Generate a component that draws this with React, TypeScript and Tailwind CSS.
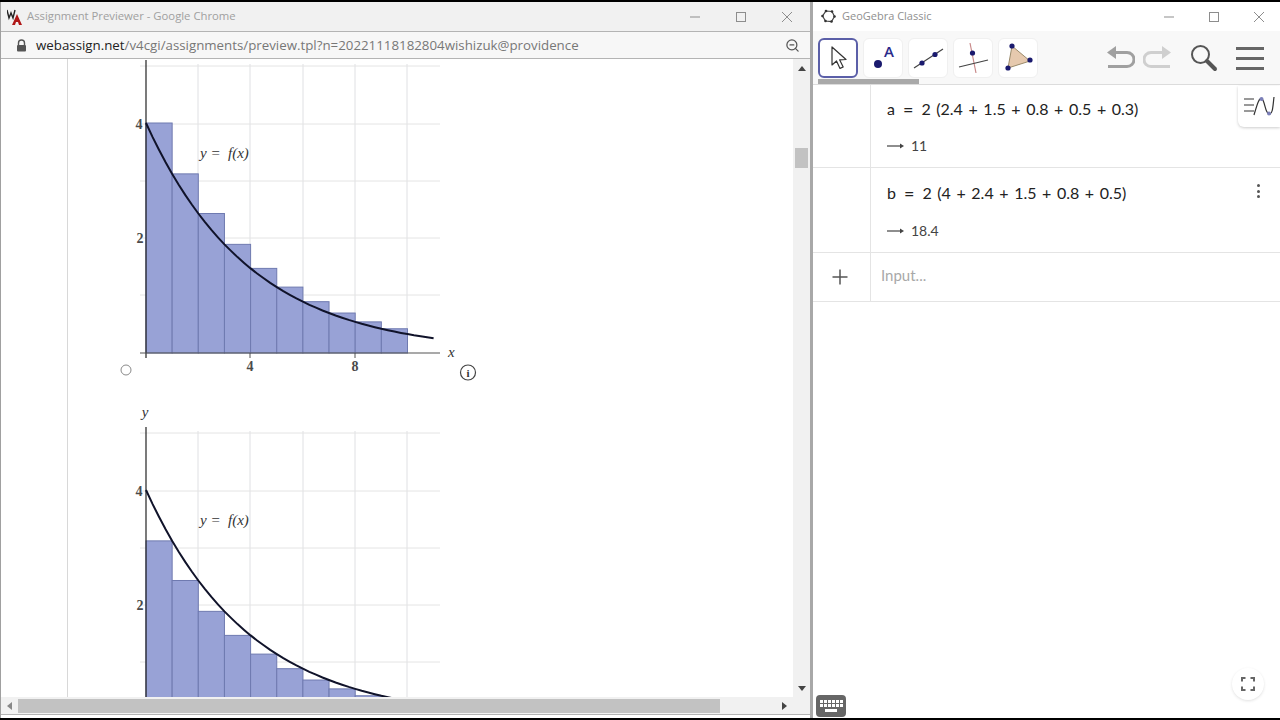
import { ZoomOut } from "lucide-react";

const SANS = "font-['Open_Sans','Noto_Sans',sans-serif]";

const f = (t: number) => 4 * Math.exp(-0.25 * t);
const px = (t: number) => 146 + t * 26.15;
const py = (t: number) => 353 - t * 57.5;

const curve = () => {
  const pts: string[] = [];
  for (let t = 0; t <= 11.1; t += 0.25) pts.push(`${px(t).toFixed(1)},${py(f(t)).toFixed(1)}`);
  return pts.join(" ");
};

// one graph, drawn in page coordinates relative to the content column
const Graph = ({ right }: { right?: boolean }) => {
  const start = right ? 1 : 0;
  return (
    <svg width="740" height="367" viewBox="68 59 740 367" className="block shrink-0 overflow-visible">
      {[198, 250, 303, 355, 407].map((x) => (
        <line key={x} x1={x} y1="64" x2={x} y2="353" stroke="#dfe0e3" strokeWidth="1" />
      ))}
      {[66, 124, 181, 238, 295].map((y) => (
        <line key={y} x1="140" y1={y} x2="440" y2={y} stroke="#e4e4e4" strokeWidth="1" />
      ))}
      {Array.from({ length: right ? 9 : 10 }).map((_, i) => {
        const h = f(i + start);
        return (
          <rect key={i} x={px(i)} y={py(h)} width="26.15" height={353 - py(h)} fill="#98a2d6" stroke="#6f7ab0" strokeWidth="1" />
        );
      })}
      <line x1="146" y1="60" x2="146" y2="358" stroke="#222" strokeWidth="1.2" />
      <line x1="140" y1="353" x2="440" y2="353" stroke="#555" strokeWidth="1.2" />
      <line x1="250" y1="353" x2="250" y2="358" stroke="#555" />
      <line x1="355" y1="353" x2="355" y2="358" stroke="#555" />
      <polyline points={curve()} fill="none" stroke="#10132a" strokeWidth="2" />
      <g fontFamily="'Liberation Serif', serif" fill="#333">
        <text x="139" y="129" fontSize="14" fontWeight="700" fill="#4a4a4a" textAnchor="middle">4</text>
        <text x="140" y="243" fontSize="14" fontWeight="700" fill="#4a4a4a" textAnchor="middle">2</text>
        <text x="200" y="158" fontSize="15" fontStyle="italic">y =</text>
        <text x="228" y="158" fontSize="15" fontStyle="italic">f(x)</text>
        {right ? (
          <text x="145" y="50" fontSize="15" fontStyle="italic" textAnchor="middle">y</text>
        ) : (
          <>
            <text x="250" y="371" fontSize="14" fontWeight="700" fill="#4a4a4a" textAnchor="middle">4</text>
            <text x="355" y="371" fontSize="14" fontWeight="700" fill="#4a4a4a" textAnchor="middle">8</text>
            <text x="448" y="357" fontSize="15" fontStyle="italic">x</text>
          </>
        )}
      </g>
      {!right && (
        <>
          <circle cx="126" cy="370" r="5" fill="#fff" stroke="#8a8a8a" />
          <circle cx="468" cy="372.5" r="7.5" fill="#fff" stroke="#444" strokeWidth="1.2" />
          <text x="468" y="377" fontSize="11" fontWeight="700" textAnchor="middle" fontFamily="'Liberation Serif', serif" fill="#333">i</text>
        </>
      )}
    </svg>
  );
};

const WinButtons = ({ gaps }: { gaps: string }) => (
  <div className={`flex items-center ${gaps}`}>
    <svg width="12" height="12" viewBox="0 0 12 12"><line x1="1" y1="6" x2="11" y2="6" stroke="#8d8d8d" /></svg>
    <svg width="12" height="12" viewBox="0 0 12 12"><rect x="1.5" y="1.5" width="9" height="9" fill="none" stroke="#8d8d8d" /></svg>
    <svg width="12" height="12" viewBox="0 0 12 12"><path d="M1 1l10 10M11 1L1 11" stroke="#8d8d8d" fill="none" /></svg>
  </div>
);

const ToolBtn = ({ active, children }: { active?: boolean; children: React.ReactNode }) => (
  <div className={`w-10 h-10 rounded-md flex items-center justify-center bg-white ${active ? "border-2 border-[#5b5fa8]" : "border border-[#f0f0f0]"}`}>
    <svg width="36" height="36" viewBox="0 0 36 36">{children}</svg>
  </div>
);

const Arrow = () => (
  <svg width="18" height="8" viewBox="0 0 18 8" className="shrink-0">
    <line x1="0" y1="4" x2="14" y2="4" stroke="#444" strokeWidth="1.2" />
    <path d="M13 1.5L17 4l-4 2.5z" fill="#444" />
  </svg>
);

const AlgebraRow = ({ name, expr, value, dots, first }: { name: string; expr: string; value: string; dots?: boolean; first?: boolean }) => (
  <div className={`flex border-b border-[#e4e4e4] shrink-0 ${first ? "h-[83px]" : "h-[85px]"}`}>
    <div className="w-[58px] border-r border-[#e4e4e4] shrink-0" />
    <div className="flex-1 pl-4 pr-5 flex flex-col relative">
      <div className={`h-[22px] flex items-center text-[16px] text-[#222] [word-spacing:1.5px] whitespace-pre font-['Lato',sans-serif] ${first ? "mt-[13px]" : "mt-[14px]"}`}>
        <span>{name}</span>
        <span className="ml-[8px] text-[18px]">=</span>
        <span className="ml-[8px]">{expr}</span>
      </div>
      <div className={`flex items-center gap-[6px] text-[14px] text-[#444] font-['Lato',sans-serif] ${first ? "mt-[15px]" : "mt-[16px]"}`}>
        <Arrow />
        <span>{value}</span>
      </div>
      {dots && (
        <div className="absolute right-5 top-[16px] flex flex-col gap-[2.5px]">
          <span className="w-[3px] h-[3px] rounded-full bg-[#555]" />
          <span className="w-[3px] h-[3px] rounded-full bg-[#555]" />
          <span className="w-[3px] h-[3px] rounded-full bg-[#555]" />
        </div>
      )}
    </div>
  </div>
);

export default function App() {
  return (
    <div className={`w-[1280px] h-[720px] bg-black py-[2px] flex overflow-hidden ${SANS}`}>
      {/* Chrome window */}
      <div className="w-[810px] h-full flex flex-col bg-white border-l border-[#a0a0a0]">
        <div className="h-[29px] shrink-0 bg-[#f1f1f1] flex items-center pl-[6px] pr-[17px]">
          <svg width="16" height="18" viewBox="0 0 16 18" className="shrink-0">
            <path d="M0 2l2 8 2-5 2 5 2-8" fill="none" stroke="#222" strokeWidth="1.4" />
            <path d="M5 17l5-11 5 11h-3l-1-3H9l-1 3z" fill="#b01818" />
          </svg>
          <span className="ml-[4px] text-[11.3px] text-[#a0a0a0]">Assignment Previewer - Google Chrome</span>
          <div className="ml-auto">
            <WinButtons gaps="gap-[34px]" />
          </div>
        </div>
        <div className="h-[28px] shrink-0 bg-[#f7f7f7] border-y border-[#b4b4b4] flex items-center pl-[15px] pr-[10px]">
          <svg width="11" height="13" viewBox="0 0 11 13" className="shrink-0">
            <path d="M2.5 6V4a3 3 0 016 0v2" fill="none" stroke="#555" strokeWidth="1.4" />
            <rect x="1" y="6" width="9" height="6.5" rx="1" fill="#555" />
          </svg>
          <span className="ml-[9px] mt-[1px] text-[13.3px] text-[#777] whitespace-nowrap">
            <span className="text-[#222]">webassign.net</span>/v4cgi/assignments/preview.tpl?n=20221118182804wishizuk@providence
          </span>
          <ZoomOut className="ml-auto w-[15px] h-[15px] text-[#555]" strokeWidth={2} />
        </div>
        <div className="flex-1 min-h-0 flex">
          <div className="flex-1 min-w-0 overflow-hidden flex flex-col border-l border-[#d8d8d8] ml-[66px]">
            <Graph />
            <Graph right />
          </div>
          {/* vertical scrollbar */}
          <div className="w-[17px] shrink-0 bg-[#f1f1f1] flex flex-col items-center">
            <div className="h-[18px] flex items-center justify-center">
              <span className="w-0 h-0 border-x-[4px] border-x-transparent border-b-[5px] border-b-[#444]" />
            </div>
            <div className="mt-[71px] w-[13px] h-[20px] bg-[#c2c2c2]" />
            <div className="mt-auto h-[17px] flex items-center justify-center">
              <span className="w-0 h-0 border-x-[4px] border-x-transparent border-t-[5px] border-t-[#444]" />
            </div>
          </div>
        </div>
        {/* horizontal scrollbar */}
        <div className="h-[17px] shrink-0 bg-[#f1f1f1] flex items-center pr-[17px]">
          <div className="w-[17px] flex justify-center">
            <span className="w-0 h-0 border-y-[4px] border-y-transparent border-r-[5px] border-r-[#888]" />
          </div>
          <div className="w-[702px] h-[14px] bg-[#c2c2c2]" />
          <div className="ml-auto w-[17px] flex justify-center">
            <span className="w-0 h-0 border-y-[4px] border-y-transparent border-l-[5px] border-l-[#444]" />
          </div>
        </div>
        <div className="h-[4px] shrink-0 bg-white border-t border-[#b4b4b4]" />
      </div>

      <div className="w-[3px] h-full shrink-0 bg-[#a8a8a8]" />

      {/* GeoGebra window */}
      <div className="flex-1 h-full flex flex-col bg-white relative">
        <div className="h-[29px] shrink-0 flex items-center pl-[8px] pr-[15px]">
          <svg width="15" height="15" viewBox="0 0 15 15" className="shrink-0">
            <path d="M5 2l6 .5 2.5 5-3 5-6-.5-3-5z" fill="none" stroke="#444" strokeWidth="1.2" />
            <circle cx="5" cy="2" r="1.3" fill="#333" /><circle cx="11" cy="2.5" r="1.3" fill="#333" /><circle cx="13.5" cy="7.5" r="1.3" fill="#333" />
            <circle cx="10.5" cy="12.5" r="1.3" fill="#333" /><circle cx="4.5" cy="12" r="1.3" fill="#333" /><circle cx="1.5" cy="7" r="1.3" fill="#333" />
          </svg>
          <span className="ml-[6px] text-[11px] text-[#8f8f8f]">GeoGebra Classic</span>
          <div className="ml-auto">
            <WinButtons gaps="gap-[33px]" />
          </div>
        </div>
        {/* toolbar */}
        <div className="h-[54px] shrink-0 bg-[#f8f8f8] border-b border-[#dcdcdc] flex pl-[5px] pr-[16px] pt-[7px] relative">
          <div className="flex gap-[5px]">
            <ToolBtn active>
              <path d="M12 7l0 18 4.5-4 3.5 7.5 3.2-1.6-3.5-7 6.3-.4z" fill="#fff" stroke="#333" strokeWidth="1.2" strokeLinejoin="round" />
            </ToolBtn>
            <ToolBtn>
              <circle cx="13" cy="24" r="4" fill="#1a1a6e" />
              <text x="19" y="17" fontSize="15" fontWeight="600" fill="#2a2a8a" fontFamily="'Open Sans', sans-serif">A</text>
            </ToolBtn>
            <ToolBtn>
              <line x1="4" y1="28" x2="33" y2="9" stroke="#444" strokeWidth="1.2" />
              <circle cx="12" cy="23" r="2.6" fill="#1a1a6e" />
              <circle cx="25" cy="14.5" r="2.6" fill="#1a1a6e" />
            </ToolBtn>
            <ToolBtn>
              <line x1="15" y1="3" x2="21" y2="33" stroke="#c98a8a" strokeWidth="1.2" />
              <line x1="4" y1="27" x2="33" y2="20" stroke="#444" strokeWidth="1.2" />
              <circle cx="17.5" cy="13" r="2.6" fill="#1a1a6e" />
            </ToolBtn>
            <ToolBtn>
              <path d="M12 6l18 15-22 7z" fill="#e6c9ae" stroke="#9a8a6a" strokeWidth="1" />
              <circle cx="12" cy="6" r="2.6" fill="#1a1a6e" />
              <circle cx="30" cy="20" r="2.6" fill="#1a1a6e" />
              <circle cx="8" cy="28" r="2.6" fill="#1a1a6e" />
            </ToolBtn>
          </div>
          <div className="ml-auto flex items-center h-10">
            <svg width="28" height="26" viewBox="0 0 28 26">
              <path d="M9 1L0 7.5 9 14z" fill="#a0a0a0" />
              <path d="M7 7.5h13a7 7 0 010 14H1" fill="none" stroke="#a0a0a0" strokeWidth="3" />
            </svg>
            <svg width="28" height="26" viewBox="0 0 28 26" className="ml-[8px]">
              <path d="M19 1l9 6.5L19 14z" fill="#cfcfcf" />
              <path d="M21 7.5H8a7 7 0 000 14h19" fill="none" stroke="#cfcfcf" strokeWidth="3" />
            </svg>
            <svg width="30" height="30" viewBox="0 0 30 30" className="ml-[18px]">
              <circle cx="11.5" cy="11.5" r="8.5" fill="none" stroke="#555" strokeWidth="2" />
              <line x1="18" y1="18" x2="26" y2="26" stroke="#555" strokeWidth="4" strokeLinecap="round" />
            </svg>
            <div className="flex flex-col gap-[7px] ml-[17px]">
              <span className="w-[28px] h-[3px] bg-[#666]" />
              <span className="w-[28px] h-[3px] bg-[#666]" />
              <span className="w-[28px] h-[3px] bg-[#666]" />
            </div>
          </div>
          <div className="absolute left-[5px] bottom-0 w-[101px] h-[5px] bg-[#a9a9a9]" />
        </div>

        {/* algebra view */}
        <div className="flex-1 min-h-0 flex flex-col">
          <AlgebraRow first name="a" expr="2 (2.4 + 1.5 + 0.8 + 0.5 + 0.3)" value="11" />
          <AlgebraRow name="b" expr="2 (4 + 2.4 + 1.5 + 0.8 + 0.5)" value="18.4" dots />
          <div className="flex h-[49px] border-b border-[#e4e4e4] shrink-0">
            <div className="w-[58px] border-r border-[#e4e4e4] flex items-center justify-center pr-[3px]">
              <svg width="16" height="16" viewBox="0 0 16 16">
                <path d="M8 0.5v15M0.5 8h15" stroke="#555" strokeWidth="1.5" fill="none" />
              </svg>
            </div>
            <div className="pl-[10px] pb-[3px] flex items-center text-[15px] text-[#a8a8a8] font-['Lato',sans-serif]">Input...</div>
          </div>
        </div>

        {/* style bar toggle */}
        <div className="absolute right-0 top-[84px] w-[42px] h-[41px] bg-white rounded-bl-md shadow-[0_1px_3px_rgba(0,0,0,0.2)] flex items-center justify-center">
          <svg width="32" height="24" viewBox="0 0 32 24">
            <path d="M1 4h10M1 10h10M1 16h10" stroke="#999" strokeWidth="2" fill="none" />
            <path d="M11 20C14 10 16 2 19 4s3 14 7 15 4-10 5-17" stroke="#333" strokeWidth="1.2" fill="none" />
            <circle cx="18.5" cy="4" r="2" fill="#7b7fb8" />
            <circle cx="26" cy="18.5" r="2" fill="#7b7fb8" />
          </svg>
        </div>

        {/* keyboard button */}
        <div className="absolute left-[3px] bottom-[1px] w-[30px] h-[22px] rounded-[4px] bg-[#666] flex flex-col items-center justify-center gap-[2px]">
          <div className="grid grid-cols-6 gap-[1px]">
            {Array.from({ length: 12 }).map((_, i) => (
              <span key={i} className="w-[3px] h-[3px] bg-white" />
            ))}
          </div>
          <span className="w-[12px] h-[3px] bg-white" />
        </div>

        {/* fullscreen button */}
        <div className="absolute right-[16px] bottom-[18px] w-8 h-8 rounded-full bg-white shadow-[0_1px_3px_rgba(0,0,0,0.12)] flex items-center justify-center">
          <svg width="14" height="14" viewBox="0 0 14 14">
            <path d="M1 4.5V1h3.5M9.5 1H13v3.5M13 9.5V13H9.5M4.5 13H1V9.5" fill="none" stroke="#666" strokeWidth="2" />
          </svg>
        </div>
      </div>
    </div>
  );
}
